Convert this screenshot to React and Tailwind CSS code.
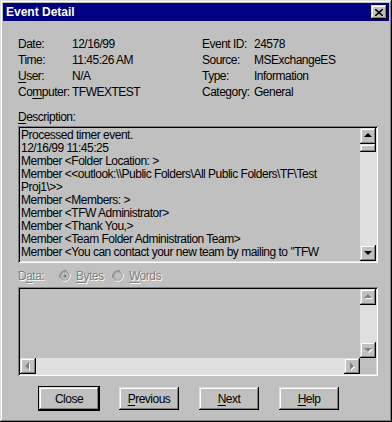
import React from "react";

const raised =
  "shadow-[inset_-1px_-1px_0_#000,inset_1px_1px_0_#dfdfdf,inset_-2px_-2px_0_#808080,inset_2px_2px_0_#fff]";
const sunken =
  "shadow-[inset_1px_1px_0_#808080,inset_-1px_-1px_0_#fff,inset_2px_2px_0_#000,inset_-2px_-2px_0_#dfdfdf]";

const descLines = [
  "Processed timer event.",
  "12/16/99 11:45:25",
  "Member <Folder Location: >",
  "Member <<outlook:\\\\Public Folders\\All Public Folders\\TF\\Test",
  "Proj1\\>>",
  "Member <Members: >",
  "Member <TFW Administrator>",
  "Member <Thank You,>",
  "Member <Team Folder Administration Team>",
  'Member <You can contact your new team by mailing to "TFW',
];

function Arrow({ dir, disabled }) {
  const pts = {
    up: "4,6 8,2 12,6",
    down: "4,3 8,7 12,3",
    left: "6,5 2,9 6,13",
    right: "3,5 7,9 3,13",
  }[dir];
  const side = dir === "left" || dir === "right";
  return (
    <svg viewBox={side ? "0 0 10 18" : "0 0 16 10"} className={side ? "w-[10px] h-[18px]" : "w-[16px] h-[10px]"}>
      {disabled && <polygon points={pts} fill="#fff" transform="translate(1 1)" />}
      <polygon points={pts} fill={disabled ? "#808080" : "#000"} />
    </svg>
  );
}

function ScrollBtn({ dir, disabled }) {
  return (
    <div className={`w-[16px] h-[16px] bg-[#c0c0c0] flex items-center justify-center shrink-0 ${raised}`}>
      <Arrow dir={dir} disabled={disabled} />
    </div>
  );
}

function Radio({ checked }) {
  return (
    <svg viewBox="0 0 12 12" className="w-[12px] h-[12px]">
      <path d="M1 8 A5.5 5.5 0 0 1 8 1" stroke="#808080" fill="none" strokeWidth="1" />
      <path d="M11 4 A5.5 5.5 0 0 1 4 11" stroke="#fff" fill="none" strokeWidth="1" />
      <circle cx="6" cy="6" r="4.2" fill="#c0c0c0" stroke="#808080" strokeWidth="0.6" />
      {checked && <circle cx="6" cy="6" r="1.6" fill="#808080" />}
    </svg>
  );
}

function U({ children }) {
  return <span className="underline underline-offset-[2px]">{children}</span>;
}

function Btn({ children, isDefault }) {
  return (
    <div
      className={`w-[60px] h-[23px] bg-[#c0c0c0] flex items-center justify-center ${
        isDefault ? "outline outline-1 outline-black" : ""
      } ${raised}`}
    >
      {children}
    </div>
  );
}

export default function App() {
  return (
    <div
      className={`w-[392px] h-[422px] bg-[#c0c0c0] p-[3px] flex flex-col text-[12px] tracking-[-0.5px] text-black ${raised}`}
      style={{ fontFamily: '"Liberation Sans", Arial, sans-serif' }}
    >
      <div className="h-[18px] bg-[#000080] flex items-center justify-between pl-[3px] pr-[2px]">
        <span className="text-white font-bold text-[12px] tracking-[0px]">Event Detail</span>
        <div className={`w-[16px] h-[14px] bg-[#c0c0c0] flex items-center justify-center ${raised}`}>
          <svg viewBox="0 0 8 7" className="w-[8px] h-[7px]">
            <path d="M0 0 L8 7 M8 0 L0 7" stroke="#000" strokeWidth="1.6" />
          </svg>
        </div>
      </div>

      <div className="flex flex-col pl-[15px] pr-[10px]">
        <div className="flex mt-[15px]">
          <div className="w-[184px] flex flex-col leading-[16px]">
            <div className="flex"><span className="w-[54px]">Date:</span><span>12/16/99</span></div>
            <div className="flex"><span className="w-[54px]">Time:</span><span>11:45:26 AM</span></div>
            <div className="flex"><span className="w-[54px]"><U>U</U>ser:</span><span>N/A</span></div>
            <div className="flex"><span className="w-[54px]">Co<U>m</U>puter:</span><span>TFWEXTEST</span></div>
          </div>
          <div className="flex flex-col leading-[16px]">
            <div className="flex"><span className="w-[52px]">Event ID:</span><span>24578</span></div>
            <div className="flex"><span className="w-[52px]">Source:</span><span>MSExchangeES</span></div>
            <div className="flex"><span className="w-[52px]">Type:</span><span>Information</span></div>
            <div className="flex"><span className="w-[52px]">Category:</span><span>General</span></div>
          </div>
        </div>

        <div className="mt-[10px] h-[14px] leading-[14px]"><U>D</U>escription:</div>

        <div className={`mt-[2px] w-[360px] h-[137px] p-[2px] flex ${sunken}`}>
          <div className="flex-1 overflow-hidden pl-[1px] pt-[1px] leading-[13px] whitespace-nowrap">
            {descLines.map((l, i) => (
              <div key={i}>{l}</div>
            ))}
          </div>
          <div className="w-[16px] flex flex-col bg-[#e0e0e0]">
            <ScrollBtn dir="up" />
            <div className={`w-[16px] h-[8px] bg-[#c0c0c0] ${raised}`} />
            <div className="flex-1" />
            <ScrollBtn dir="down" />
          </div>
        </div>

        <div className="mt-[5px] h-[16px] flex items-center text-[#808080] [text-shadow:1px_1px_0_#fff]">
          <span className="w-[41px]">D<U>a</U>ta:</span>
          <Radio checked />
          <span className="ml-[5px] w-[36px]"><U>B</U>ytes</span>
          <Radio />
          <span className="ml-[5px]"><U>W</U>ords</span>
        </div>

        <div className={`mt-[3px] w-[360px] h-[89px] p-[2px] flex flex-col ${sunken}`}>
          <div className="flex flex-1">
            <div className="flex-1" />
            <div className="w-[16px] flex flex-col bg-[#e0e0e0]">
              <ScrollBtn dir="up" disabled />
              <div className="flex-1" />
              <ScrollBtn dir="down" disabled />
            </div>
          </div>
          <div className="flex h-[16px]">
            <div className="flex-1 flex bg-[#e0e0e0]">
              <ScrollBtn dir="left" disabled />
              <div className="flex-1" />
              <ScrollBtn dir="right" disabled />
            </div>
            <div className="w-[16px] bg-[#c0c0c0]" />
          </div>
        </div>

        <div className="mt-[11px] flex gap-[20px] pl-[21px]">
          <Btn isDefault>Close</Btn>
          <Btn><U>P</U>revious</Btn>
          <Btn><U>N</U>ext</Btn>
          <Btn><U>H</U>elp</Btn>
        </div>
      </div>
    </div>
  );
}
